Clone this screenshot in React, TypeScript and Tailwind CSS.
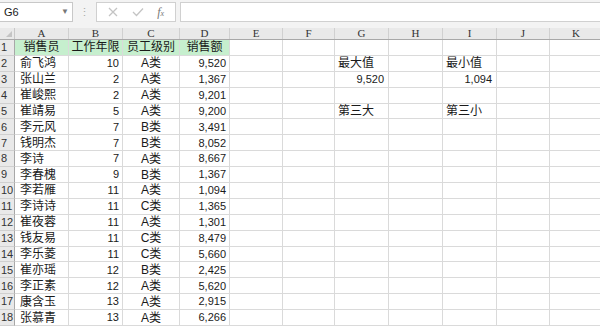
import React from 'react';

type Row = [string, string, string, string];

const cols = [
  { key: 'A', w: 'w-[54px]' },
  { key: 'B', w: 'w-[54px]' },
  { key: 'C', w: 'w-[57px]' },
  { key: 'D', w: 'w-[50px]' },
  { key: 'E', w: 'w-[53px]' },
  { key: 'F', w: 'w-[52px]' },
  { key: 'G', w: 'w-[54px]' },
  { key: 'H', w: 'w-[54px]' },
  { key: 'I', w: 'w-[54px]' },
  { key: 'J', w: 'w-[53px]' },
  { key: 'K', w: 'w-[53px]' },
];

const data: Row[] = [
  ['俞飞鸿', '10', 'A类', '9,520'],
  ['张山兰', '2', 'A类', '1,367'],
  ['崔峻熙', '2', 'A类', '9,201'],
  ['崔靖易', '5', 'A类', '9,200'],
  ['李元风', '7', 'B类', '3,491'],
  ['钱明杰', '7', 'B类', '8,052'],
  ['李诗', '7', 'A类', '8,667'],
  ['李春槐', '9', 'B类', '1,367'],
  ['李若雁', '11', 'A类', '1,094'],
  ['李诗诗', '11', 'C类', '1,365'],
  ['崔夜蓉', '11', 'A类', '1,301'],
  ['钱友易', '11', 'C类', '8,479'],
  ['李乐菱', '11', 'C类', '5,660'],
  ['崔亦瑶', '12', 'B类', '2,425'],
  ['李正素', '12', 'A类', '5,620'],
  ['康含玉', '13', 'A类', '2,915'],
  ['张慕青', '13', 'A类', '6,266'],
];

// extra cells over in G and I
const extras: Record<number, Record<string, { text: string; num?: boolean }>> = {
  2: { G: { text: '最大值' }, I: { text: '最小值' } },
  3: { G: { text: '9,520', num: true }, I: { text: '1,094', num: true } },
  5: { G: { text: '第三大' }, I: { text: '第三小' } },
};

type CellData = { text: string; align: string; green?: boolean; num?: boolean };

const cjk = "font-['Liberation_Sans','Noto_Sans_CJK_SC',sans-serif]";

const Cell: React.FC<{ w: string; className?: string; children?: React.ReactNode }> = ({ w, className = '', children }) => (
  <div className={`${w} shrink-0 h-full border-r border-b border-[#dadada] flex items-center overflow-hidden whitespace-nowrap ${className}`}>
    {children}
  </div>
);

const App: React.FC = () => {
  const rows: { n: number; cells: Record<string, CellData> }[] = [];

  rows.push({
    n: 1,
    cells: {
      A: { text: '销售员', align: 'justify-center', green: true },
      B: { text: '工作年限', align: 'justify-center', green: true },
      C: { text: '员工级别', align: 'justify-center', green: true },
      D: { text: '销售额', align: 'justify-center', green: true },
    },
  });

  data.forEach((r, i) => {
    const n = i + 2;
    const cells: Record<string, CellData> = {
      A: { text: r[0], align: 'justify-start pl-[5px]' },
      B: { text: r[1], align: 'justify-end pr-[3px]', num: true },
      C: { text: r[2], align: 'justify-center' },
      D: { text: r[3], align: 'justify-end pr-[3px]', num: true },
    };
    const ex = extras[n];
    if (ex) {
      Object.entries(ex).forEach(([k, v]) => {
        cells[k] = { text: v.text, align: v.num ? 'justify-end pr-[4px]' : 'justify-start pl-[3px]', num: v.num };
      });
    }
    rows.push({ n, cells });
  });

  return (
    <div className={`w-[600px] h-[326px] overflow-hidden bg-white text-[#1a1a1a] ${cjk}`}>
      {/* formula bar */}
      <div className="h-[28px] bg-[#f3f3f3] flex items-start pt-[2px]">
        <div className="w-[73px] h-[20px] bg-white border border-[#c8c8c8] border-l-0 flex items-center justify-between pl-[4px] pr-[3px]">
          <span className="text-[11px]">G6</span>
          <span className="text-[8px] text-[#777]">▼</span>
        </div>
        <div className="w-[23px] h-[20px] flex items-center justify-center text-[#aaa] text-[11px]">⋮</div>
        <div className="w-[80px] h-[20px] bg-white border border-[#d0d0d0] flex items-center justify-around px-[4px]">
          <svg width="10" height="10" viewBox="0 0 10 10" className="stroke-[#c4c4c4]" strokeWidth="1.3" fill="none">
            <path d="M1 1 L9 9 M9 1 L1 9" />
          </svg>
          <svg width="12" height="10" viewBox="0 0 12 10" className="stroke-[#c4c4c4]" strokeWidth="1.3" fill="none">
            <path d="M1 5 L4.5 8.5 L11 1.5" />
          </svg>
          <span className="font-['Liberation_Serif',serif] italic text-[12px] text-[#777]">
            f<span className="text-[8px]">x</span>
          </span>
        </div>
        <div className="ml-[4px] flex-1 h-[20px] bg-white border border-[#d0d0d0] border-r-0" />
      </div>

      {/* column headers */}
      <div className="h-[12px] flex bg-[#e9e9e9] border-b border-[#a8a8a8] text-[11px] leading-none font-['Liberation_Serif','Noto_Sans_CJK_SC',serif] text-[#333]">
        <div className="w-[15px] shrink-0 h-full border-r border-[#c8c8c8] relative">
          <svg className="absolute right-[2px] bottom-[2px]" width="6" height="6" viewBox="0 0 7 7">
            <path d="M7 0 L7 7 L0 7 Z" fill="#c4c4c4" />
          </svg>
        </div>
        {cols.map((c) => (
          <div key={c.key} className={`${c.w} shrink-0 h-full border-r border-[#d0d0d0] flex items-end justify-center`}>
            {c.key}
          </div>
        ))}
      </div>

      {/* grid */}
      {rows.map((r) => (
        <div key={r.n} className="h-[15.9px] flex">
          <div className="w-[15px] shrink-0 h-full bg-[#e9e9e9] border-r border-[#a8a8a8] border-b border-b-[#d0d0d0] flex items-center text-[11px] text-[#333] pl-[1px]">
            {r.n}
          </div>
          {cols.map((c) => {
            const cell = r.cells[c.key];
            return (
              <Cell
                key={c.key}
                w={c.w}
                className={`${cell ? cell.align : ''} ${cell && cell.green ? 'bg-[#c6efce]' : ''} ${
                  cell && cell.num ? 'text-[11px]' : 'text-[12px]'
                }`}
              >
                {cell ? cell.text : null}
              </Cell>
            );
          })}
        </div>
      ))}
    </div>
  );
};

export default App;
